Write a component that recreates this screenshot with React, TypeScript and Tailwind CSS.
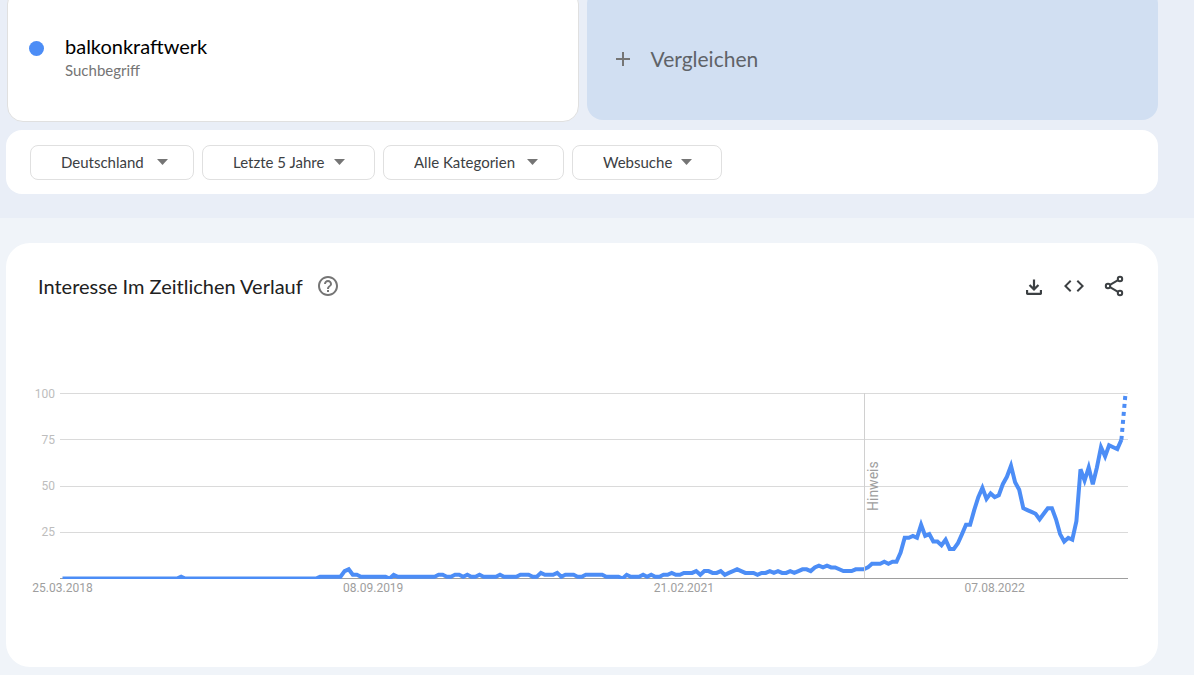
import { MdCode, MdHelpOutline } from "react-icons/md";

// weekly values, 25.03.2018 onwards
const head = [
    ...Array(29).fill(0), 1, ...Array(33).fill(0),
    1, 1, 1, 1, 1, 1, 4, 5, 2, 2, 1, 1, 1, 1, 1, 1, 1, 0, 2,
    1, 1, 1, 1, 1, 1, 1, 1, 1, 1,
];
const tail = [
    2, 2, 1, 1, 2, 2, 1, 2, 1, 1, 2, 1, 1, 1, 1, 2, 1, 1, 1, 1,
    2, 2, 2, 1, 1, 3, 2, 2, 2, 3, 1, 2, 2, 2, 1, 1, 2, 2, 2, 2,
    2, 1, 1, 1, 1, 0, 2, 1, 1, 1, 2, 1, 2, 1, 1, 2, 2, 3, 2, 2,
    3, 3, 3, 4, 2, 4, 4, 3, 3, 4, 2, 3, 4, 5, 4, 3, 3, 3, 2, 3,
    3, 4, 3, 4, 3, 3, 4, 3, 4, 5, 5, 4, 6, 7, 6, 7, 6, 6, 5, 4,
    4, 4, 5, 5, 5, 6, 8, 8, 8, 9, 8, 9, 9, 14, 22, 22, 23, 22, 29, 23,
    24, 20, 20, 18, 21, 16, 16, 19, 24, 29, 29, 37, 44, 49, 43, 46, 44, 45, 51, 55,
    61, 52, 48, 38, 37, 36, 35, 32, 35, 38, 38, 32, 24, 20, 22, 21, 31, 59, 53, 60,
    51, 60, 71, 66, 72, 71, 70, 75, 100,
];
const values: number[] = [...head, ...tail];

const LEFT = 56.5;
const RIGHT = 1119.5;
const TOP = 23.5;
const BOTTOM = 208.5;

const pointX = (i: number) =>
    LEFT + (i * (RIGHT - LEFT)) / (values.length - 1);
const pointY = (v: number) => BOTTOM - (v * (BOTTOM - TOP)) / 100;
const point = (i: number) =>
    `${pointX(i).toFixed(1)},${pointY(values[i]).toFixed(1)}`;

const gridLines = [
    { value: 100, y: 23.5 },
    { value: 75, y: 69.5 },
    { value: 50, y: 116.5 },
    { value: 25, y: 162.5 },
];

const dates = [
    { label: "25.03.2018", week: 0 },
    { label: "08.09.2019", week: 76 },
    { label: "21.02.2021", week: 152 },
    { label: "07.08.2022", week: 228 },
];

const filters = [
    { name: "Region", value: "Deutschland", width: "w-[164px]", arrow: "mr-[26px]" },
    { name: "Zeitraum", value: "Letzte 5 Jahre", width: "w-[173px]", arrow: "mr-[30px]" },
    { name: "Kategorie", value: "Alle Kategorien", width: "w-[181px]", arrow: "mr-[26px]" },
    { name: "Suchtyp", value: "Websuche", width: "w-[150px]", arrow: "mr-[30px]" },
];

type FilterProps = {
    filter: (typeof filters)[number];
};

const Filter = ({ filter }: FilterProps) => (
    <div className={`grid items-center ${filter.width}`}>
        <select
            aria-label={filter.name}
            className="col-start-1 row-start-1 h-[35px] w-full appearance-none rounded-lg border border-[#e0e0e0] bg-white pl-[30px] text-[15px] text-[#3c4043]"
        >
            <option>{filter.value}</option>
        </select>
        <svg
            viewBox="0 0 11 6"
            className={`pointer-events-none col-start-1 row-start-1 h-[6px] w-[11px] justify-self-end ${filter.arrow}`}
        >
            <path d="M0 0h11L5.500 6z" fill="#757575" />
        </svg>
    </div>
);

const TrendChart = () => {
    const last = values.length - 1;
    const line = values.slice(0, last).map((_, i) => point(i)).join(" ");

    return (
        <svg
            viewBox="0 0 1152 240"
            className="block w-full font-[Roboto,sans-serif]"
            role="img"
            aria-label="Interesse im zeitlichen Verlauf"
        >
            <clipPath id="plot">
                <rect x="54" y="20" width="1070" height="189" />
            </clipPath>
            {gridLines.map(({ value, y }) => (
                <g key={value}>
                    <path d={`M54 ${y}H1122`} stroke="#dadada" />
                    <text
                        x="49"
                        y={Math.round(pointY(value)) + 4}
                        textAnchor="end"
                        fontSize="12"
                        fill="#bdbdbd"
                    >
                        {value}
                    </text>
                </g>
            ))}
            <path d="M54 208.500H1122" stroke="#9e9e9e" />
            {dates.map(({ label, week }) => (
                <text
                    key={label}
                    x={pointX(week)}
                    y="222"
                    textAnchor="middle"
                    fontSize="12"
                    fill="#9e9e9e"
                >
                    {label}
                </text>
            ))}
            <g clipPath="url(#plot)" fill="none" stroke="#4c8df6" strokeWidth="4">
                <polyline points={line} />
                <polyline
                    points={`${point(last - 1)} ${point(last)}`}
                    strokeDasharray="4 4"
                />
            </g>
            <path d="M858.500 23V208" stroke="#d0d0d0" />
            <text
                transform="translate(872 141) rotate(-90)"
                fontSize="14"
                fill="#9e9e9e"
            >
                Hinweis
            </text>
        </svg>
    );
};

const App = () => {
    return (
        <main className="min-h-screen bg-[#f0f4f9] font-[Lato,sans-serif]">
            <section className="bg-[#e9eef7] pr-9 pb-6 pl-[6px]">
                <div className="-mt-3 grid grid-cols-2 items-start gap-2 pl-px">
                    <div className="flex h-[134px] items-start rounded-2xl border border-[#e0e0e0] bg-white pt-[45px] pl-[21px]">
                        <span className="mt-[7px] size-[15px] shrink-0 rounded-full bg-[#4c8df6]" />
                        <div className="pl-[21px]">
                            <h2 className="text-[20px] leading-6 text-black">
                                balkonkraftwerk
                            </h2>
                            <p className="text-[15px] leading-6 text-[#757575]">
                                Suchbegriff
                            </p>
                        </div>
                    </div>
                    <button className="flex h-[132px] items-center rounded-2xl bg-[#d1dff2] pt-[10px] pl-[29px] text-[21px] text-[#5f6368]">
                        <svg viewBox="0 0 14 14" className="size-[14px]">
                            <path d="M7 0v14M0 7h14" stroke="#757575" strokeWidth="2" />
                        </svg>
                        <span className="pl-[21px]">Vergleichen</span>
                    </button>
                </div>
                <div className="mt-2 flex h-16 items-center gap-2 rounded-2xl bg-white pl-6">
                    {filters.map((filter) => (
                        <Filter key={filter.name} filter={filter} />
                    ))}
                </div>
            </section>

            <section className="pt-[25px] pr-9 pb-2 pl-[6px]">
                <div className="rounded-3xl bg-white pt-[31px] pb-[57px]">
                    <header className="flex items-center px-8">
                        <h1 className="text-[20px] leading-6 text-[#212121]">
                            Interesse Im Zeitlichen Verlauf
                        </h1>
                        <button aria-label="Hilfe" className="ml-[13px] text-[#757575]">
                            <MdHelpOutline size={24} />
                        </button>
                        <div className="ml-auto flex gap-4 text-[#3c4043]">
                            <button aria-label="Herunterladen">
                                <svg viewBox="0 -960 960 960" className="size-6" fill="currentColor">
                                    <path d="M480-280 270-490l62-62 104 104v-292h88v292l104-104 62 62-210 210ZM220-120q-25 0-42.500-17.500T160-180v-140h86v114h468v-114h86v140q0 25-17.500 42.500T740-120H220Z" />
                                </svg>
                            </button>
                            <button aria-label="Einbetten">
                                <MdCode size={24} />
                            </button>
                            <button aria-label="Teilen">
                                <svg
                                    viewBox="0 0 24 24"
                                    className="size-6"
                                    fill="none"
                                    stroke="currentColor"
                                    strokeWidth="2"
                                >
                                    <circle cx="18" cy="5" r="2.200" />
                                    <circle cx="6" cy="12" r="2.200" />
                                    <circle cx="18" cy="19" r="2.200" />
                                    <path d="m8 10.800 8-4.600M8 13.200l8 4.600" />
                                </svg>
                            </button>
                        </div>
                    </header>
                    <div className="pt-[72px]">
                        <TrendChart />
                    </div>
                </div>
            </section>
        </main>
    );
};

export default App;
